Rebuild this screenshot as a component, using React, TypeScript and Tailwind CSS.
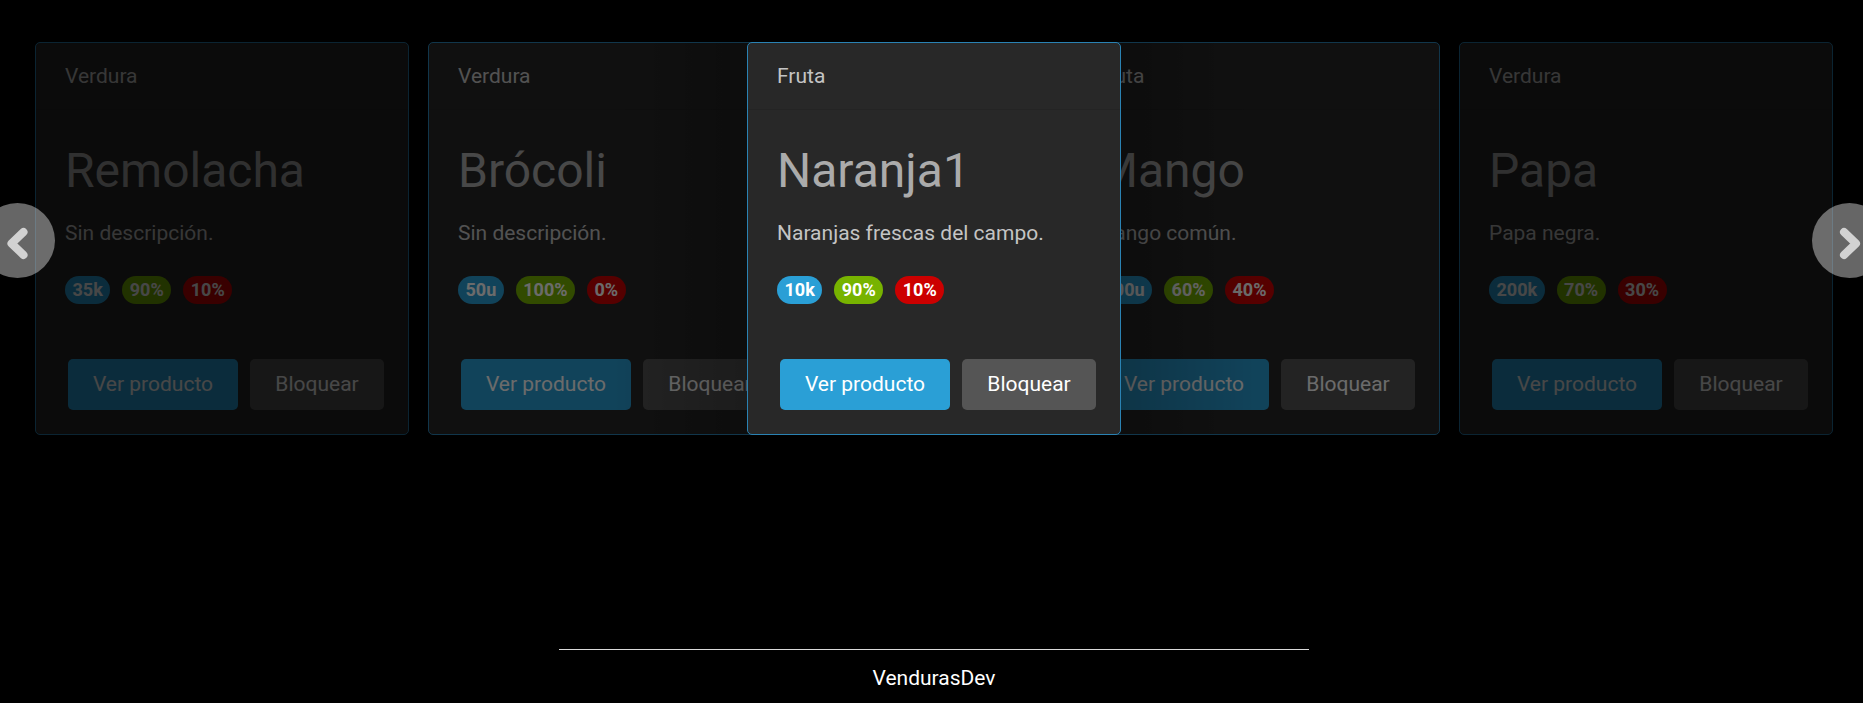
import React from "react";

interface Product {
    category: string;
    name: string;
    description: string;
    stock: string;
    good: string;
    bad: string;
}

const products: Product[] = [
    { category: "Verdura", name: "Remolacha", description: "Sin descripción.", stock: "35k", good: "90%", bad: "10%" },
    { category: "Verdura", name: "Brócoli", description: "Sin descripción.", stock: "50u", good: "100%", bad: "0%" },
    { category: "Fruta", name: "Naranja1", description: "Naranjas frescas del campo.", stock: "10k", good: "90%", bad: "10%" },
    { category: "Fruta", name: "Mango", description: "Mango común.", stock: "100u", good: "60%", bad: "40%" },
    { category: "Verdura", name: "Papa", description: "Papa negra.", stock: "200k", good: "70%", bad: "30%" },
];

interface CardProps {
    product: Product;
    className: string;
    shadow?: "left" | "right";
}

const ProductCard: React.FC<CardProps> = ({ product, className, shadow }) => {
    return (
        <div className={`relative w-[374px] h-[393px] shrink-0 flex flex-col rounded-[5px] border border-[#2a82b3] bg-[#282828] overflow-hidden ${className}`}>
            {/* card header */}
            <div className="h-[67px] flex items-center px-[29px] border-b border-[#242424] text-[21px] leading-[30px] text-[#c4c4c4]">
                {product.category}
            </div>

            {/* card body */}
            <div className="px-[29px] pt-[32px] flex flex-col">
                <h2 className="text-[48px] leading-[57px] text-[#ababab]">{product.name}</h2>
                <p className="mt-[19px] text-[21px] leading-[30px] text-[#c4c4c4]">{product.description}</p>
                <div className="mt-[28px] flex gap-3 text-[18px] font-bold leading-[28px] text-white">
                    <span className="rounded-full bg-[#2a9fd6] px-[7.5px]">{product.stock}</span>
                    <span className="rounded-full bg-[#77b300] px-[7.5px]">{product.good}</span>
                    <span className="rounded-full bg-[#cc0000] px-[7.5px]">{product.bad}</span>
                </div>
            </div>

            {/* card footer */}
            <div className="mt-[55px] pl-[32px] flex gap-3 text-[21px] text-white">
                <button className="w-[170px] h-[51px] rounded-[5px] bg-[#2a9fd6]">Ver producto</button>
                <button className="w-[134px] h-[51px] rounded-[5px] bg-[#555555]">Bloquear</button>
            </div>

            {shadow === "right" && (
                <div className="absolute inset-0 bg-linear-to-r from-transparent via-transparent to-black/30" />
            )}
            {shadow === "left" && (
                <div className="absolute inset-0 bg-linear-to-l from-transparent via-transparent to-black/30" />
            )}
        </div>
    );
};

const Arrow: React.FC<{ side: "left" | "right" }> = ({ side }) => {
    const pos = side === "left" ? "left-[-20px]" : "right-[-24px]";
    return (
        <button className={`absolute top-[203px] ${pos} z-20 w-[75px] h-[75px] rounded-full bg-white/40`}>
            <svg width="75" height="75" viewBox="0 0 75 75" className="block">
                {side === "left" ? (
                    <polyline points="43.5,29 31.5,40.5 43.5,52" fill="none" stroke="#d2d2d2" strokeWidth="8" strokeLinecap="round" strokeLinejoin="round" />
                ) : (
                    <polyline points="32,29 44,40.5 32,52" fill="none" stroke="#d2d2d2" strokeWidth="8" strokeLinecap="round" strokeLinejoin="round" />
                )}
            </svg>
        </button>
    );
};

export default function App() {
    return (
        <div className="w-full h-[703px] bg-black font-['Roboto','Liberation_Sans',sans-serif] overflow-hidden">
            <div className="relative pt-[42px]">
                <div className="flex items-start pl-[35px]">
                    <ProductCard product={products[0]} className="opacity-[0.28]" />
                    <ProductCard product={products[1]} className="ml-[19px] opacity-[0.42]" shadow="right" />
                    <ProductCard product={products[2]} className="-ml-[55px] z-10" />
                    <ProductCard product={products[3]} className="-ml-[55px] opacity-[0.42]" shadow="left" />
                    <ProductCard product={products[4]} className="ml-[19px] opacity-[0.28]" />
                </div>
                <Arrow side="left" />
                <Arrow side="right" />
            </div>

            <footer className="mt-[214px] pl-[5px] flex flex-col items-center">
                <div className="w-[750px] h-px bg-[#dadada]" />
                <p className="mt-[13px] text-[21px] leading-[30px] text-white">VendurasDev</p>
            </footer>
        </div>
    );
}
